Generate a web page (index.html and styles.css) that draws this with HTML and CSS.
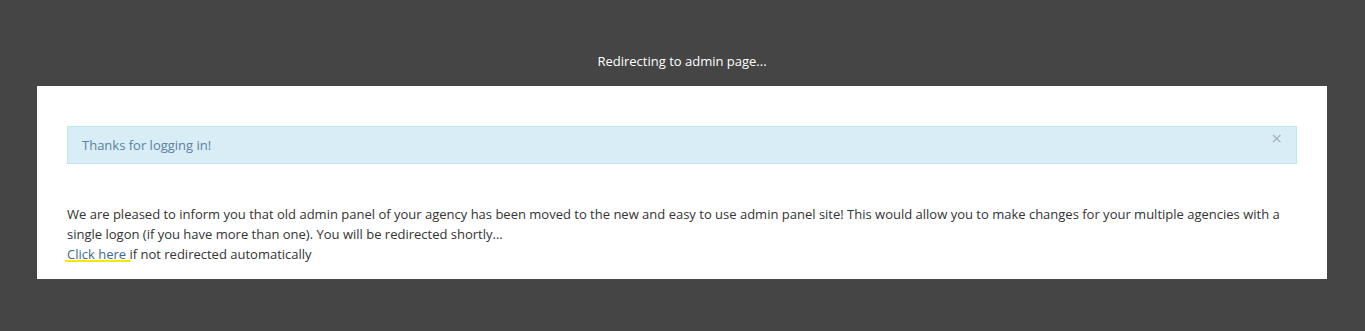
FILE: index.html
```html
<!DOCTYPE html>
<html lang="en">
<head>
    <meta charset="UTF-8">
    <title>Redirecting</title>
    <link rel="stylesheet" href="styles.css">
</head>
<body>
    <h1 class="page-title">Redirecting to admin page...</h1>
    <div class="panel">
        <div class="alert alert-info">
            <span class="close">&times;</span>
            Thanks for logging in!
        </div>
        <p class="notice">
            We are pleased to inform you that old admin panel of your agency has been moved to the new and easy to use admin panel site! This would allow you to make changes for your multiple agencies with a single logon (if you have more than one). You will be redirected shortly...<br>
            <a href="#" class="redirect-link">Click here </a>if not redirected automatically
        </p>
    </div>
</body>
</html>
```

FILE: styles.css
```css
body {
    font-family: "Open Sans", Arial, sans-serif;
    font-size: 13px;
    line-height: 20px;
    background-color: #454545;
    color: #333333;
    margin: 0;
    padding: 51px 38px 0 37px;
}

.page-title {
    margin: 0 0 15px;
    font-size: 13px;
    font-weight: normal;
    line-height: 20px;
    color: #ffffff;
    text-align: center;
}

.panel {
    background: #ffffff;
    padding: 40px 30px 15px;
}

.alert {
    position: relative;
    padding: 8px 14px;
    border: 1px solid #bce8f1;
    background-color: #d9edf7;
    color: #5a829e;
    font-size: 13px;
}

.close {
    position: absolute;
    right: 14px;
    top: 1px;
    font-size: 19px;
    line-height: 20px;
    color: #a3b5c0;
}

.notice {
    margin: 40px 0 0;
}

.redirect-link {
    position: relative;
    color: #3a6a8e;
    text-decoration: underline;
    text-decoration-color: #7f98ab;
}

/* yellow highlight under the link */
.redirect-link::after {
    content: "";
    position: absolute;
    left: -2px;
    right: -2px;
    bottom: 1px;
    height: 2px;
    border-radius: 1px;
    background-color: #f5e800;
}
```
